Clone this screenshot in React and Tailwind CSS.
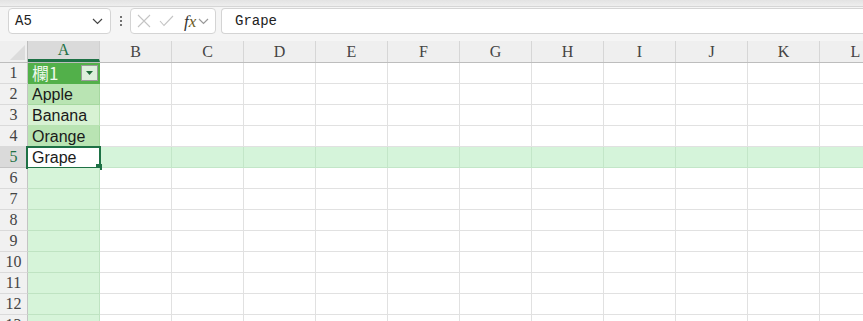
import React from "react";

const COLS = ["A", "B", "C", "D", "E", "F", "G", "H", "I", "J", "K", "L"];
const ROWS = [1, 2, 3, 4, 5, 6, 7, 8, 9, 10, 11, 12, 13];

// table values in column A
const DATA = { 2: "Apple", 3: "Banana", 4: "Orange", 5: "Grape" };

function Chevron({ className }) {
  return (
    <svg width="11" height="7" viewBox="0 0 11 7" className={className}>
      <path d="M1 1 L5.5 5.5 L10 1" fill="none" stroke="currentColor" strokeWidth="1.2" />
    </svg>
  );
}

function Toolbar() {
  return (
    <div className="h-[34px] bg-[#f5f5f5] flex items-start pt-[1px] pl-[8px]">
      <div className="w-[103px] h-[26px] rounded-[4px] border border-[#d4d4d4] bg-white flex items-center justify-between pl-[6px] pr-[7px]">
        <span className="text-[14px] text-[#222]" style={{ fontFamily: '"Liberation Mono", monospace' }}>A5</span>
        <Chevron className="text-[#444]" />
      </div>
      <div className="w-[19px] h-[26px] flex flex-col items-center justify-center gap-[2px]">
        <span className="w-[2px] h-[2px] bg-[#444] rounded-full" />
        <span className="w-[2px] h-[2px] bg-[#444] rounded-full" />
        <span className="w-[2px] h-[2px] bg-[#444] rounded-full" />
      </div>
      <div className="w-[86px] h-[26px] rounded-[4px] border border-[#d4d4d4] bg-white flex items-center pl-[6px] gap-[8px]">
        <svg width="14" height="14" viewBox="0 0 14 14">
          <path d="M1 1 L13 13 M13 1 L1 13" stroke="#c4c4c4" strokeWidth="1.1" />
        </svg>
        <svg width="15" height="12" viewBox="0 0 15 12">
          <path d="M1 6 L5 10.5 L14 1" fill="none" stroke="#c4c4c4" strokeWidth="1.1" />
        </svg>
        <div className="flex items-center gap-[2px] ml-[2px]">
          <span className="text-[17px] italic text-[#333] leading-none" style={{ fontFamily: '"Liberation Serif", serif' }}>
            f<span className="text-[#6b5a1e]">x</span>
          </span>
          <Chevron className="text-[#999]" />
        </div>
      </div>
      <div className="ml-[5px] flex-1 h-[26px] rounded-l-[4px] border border-r-0 border-[#d4d4d4] bg-white flex items-center pl-[13px]">
        <span className="text-[14px] text-[#222]" style={{ fontFamily: '"Liberation Mono", monospace' }}>Grape</span>
      </div>
    </div>
  );
}

function ColumnHeader() {
  return (
    <div className="flex h-[22px] bg-[#efefef] border-b border-[#bdbdbd]" style={{ fontFamily: '"Liberation Serif", serif' }}>
      <div className="w-[28px] shrink-0 border-r border-[#bdbdbd] flex items-end justify-end pr-[2px] pb-[2px]">
        <svg width="15" height="15" viewBox="0 0 15 15">
          <path d="M15 0 L15 15 L0 15 Z" fill="#dcdcdc" />
        </svg>
      </div>
      {COLS.map((c) => (
        <div
          key={c}
          className={
            c === "A"
              ? "w-[72px] shrink-0 bg-[#dadada] border-b-[3px] border-[#1e7145] border-r border-r-[#d0d0d0] flex items-center justify-center text-[16px] text-[#1e7145]"
              : "w-[72px] shrink-0 border-r border-[#d6d6d6] flex items-center justify-center text-[16px] text-[#444]"
          }
        >
          {c}
        </div>
      ))}
    </div>
  );
}

function cellA(r) {
  if (r === 1) return "bg-[#52b04a] border-b border-r border-[#52b04a]";
  if (r === 2 || r === 4) return "bg-[#b9e4b3] border-b border-r border-[#a6d8a0]";
  if (r === 3) return "bg-[#d7f2d3] border-b border-r border-[#b8e2b2]";
  if (r === 5) return "bg-white border-b border-r border-[#e1e1e1]";
  return "bg-[#d6f4d9] border-b border-r border-[#bfe3c2]";
}

function Row({ r }) {
  const sel = r === 5;
  return (
    <div className="flex h-[21px]">
      <div
        className={
          sel
            ? "w-[28px] shrink-0 bg-[#dadada] border-b border-r border-[#c4c4c4] flex items-center justify-center text-[16px] text-[#1e7145]"
            : "w-[28px] shrink-0 bg-[#f1f1f1] border-b border-r border-[#c4c4c4] border-b-[#dadada] flex items-center justify-center text-[16px] text-[#444]"
        }
        style={{ fontFamily: '"Liberation Serif", serif' }}
      >
        {r}
      </div>
      <div className={"relative w-[72px] shrink-0 flex items-center pl-[4px] " + cellA(r)} style={{ fontFamily: '"Liberation Sans", sans-serif' }}>
        {r === 1 && (
          <>
            <span className="text-[17px] text-[#eef8ec]" style={{ fontFamily: '"Noto Sans CJK TC", sans-serif' }}>欄1</span>
            <div className="absolute right-[1px] top-[2px] w-[17px] h-[16px] bg-[#dcefdc] border border-[#9a9a9a] flex items-center justify-center">
              <svg width="7" height="4" viewBox="0 0 7 4">
                <path d="M0 0 L7 0 L3.5 4 Z" fill="#1e6b3a" />
              </svg>
            </div>
          </>
        )}
        {DATA[r] && <span className="text-[16px] text-[#1a1a1a] pt-[1px]">{DATA[r]}</span>}
        {sel && (
          <>
            <div className="absolute left-[-2px] top-[-1px] w-[75px] h-[23px] border-2 border-[#1e7145]" />
            <div className="absolute right-[-3px] bottom-[-3px] w-[6px] h-[6px] bg-[#1e7145]" />
          </>
        )}
      </div>
      {COLS.slice(1).map((c) => (
        <div
          key={c}
          className={
            sel
              ? "w-[72px] shrink-0 bg-[#d5f4da] border-b border-r border-[#c3e6c8]"
              : "w-[72px] shrink-0 bg-white border-b border-r border-[#e1e1e1]"
          }
        />
      ))}
    </div>
  );
}

export default function App() {
  return (
    <div className="w-[863px] h-[321px] overflow-hidden bg-white">
      <div className="h-[7px] bg-gradient-to-b from-[#e3e3e3] to-[#eeeeee] border-b border-[#d6d6d6]" />
      <Toolbar />
      <ColumnHeader />
      <div>
        {ROWS.map((r) => (
          <Row key={r} r={r} />
        ))}
      </div>
    </div>
  );
}
